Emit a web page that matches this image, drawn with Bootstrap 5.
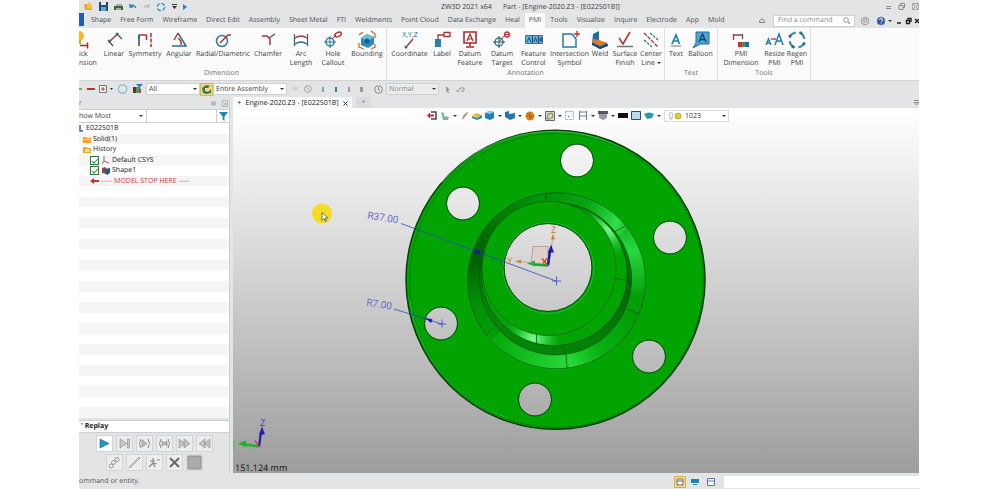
<!DOCTYPE html>
<html lang="en">
<head>
<meta charset="utf-8">
<meta name="viewport" content="width=device-width, initial-scale=1">
<title>ZW3D 2021 x64</title>
<link href="https://cdn.jsdelivr.net/npm/bootstrap@5.3.0/dist/css/bootstrap.min.css" rel="stylesheet">
<style>
  body { font: 7px/9px "Open Sans", "Noto Sans", sans-serif; text-rendering: geometricPrecision; color: #3c3c3c; background: #fff; padding: 0 73px 0 79px; }
  button, input, select { font: inherit; color: inherit; text-rendering: inherit; }
  button { border: 0; background: none; padding: 0; }
  svg { display: block; flex: none; }
  .app-window { background: #e3e4e6; }

  .title-row { height: 13px; }
  .quick-tools { gap: 6px; padding-left: 5px; }
  .title-text { gap: 11px; white-space: pre; padding-top: 1px; }
  .title-left { width: 362px; }

  .menu-row { height: 15px; }
  .file-tab { width: 5px; height: 13px; background: #1f5cb5; }
  .menu-tab { padding: 0 4px; height: 15px; color: #505050; text-decoration: none; white-space: nowrap; line-height: 16px; }
  .menu-tab.current { background: #fbfbfb; }
  .menu-tabs { padding-left: 3px; gap: 1px; }
  .find-box { width: 82px; height: 12px; border: 1px solid #d0d0d0; background: #fff; }
  .find-box input { border: 0; outline: 0; width: 60px; padding: 0; background: none; }
  .find-box input::placeholder { color: #8a8a8a; opacity: 1; }

  .ribbon { height: 53px; background: #fbfbfb; border-bottom: 1px solid #d4d4d4; }
  .tool-group { border-right: 1px solid #e0e0e0; }
  .tool-grid { display: grid; height: 41px; }
  .tool { display: flex; flex-direction: column; align-items: center; padding-top: 2px; white-space: nowrap; }
  .tool.at-edge { align-items: flex-start; text-align: left; }
  .tool svg { width: 20px; height: 20px; }
  .group-name { color: #707070; text-align: center; }
  .g-dim { width: 308px; }
  .g-dim .tool-grid { grid-template-columns: 22px 26px 36px 32px 56px 34px 32px 32px 36px; }
  .g-dim .group-name { padding-right: 22px; }
  .g-ann { width: 278px; }
  .g-ann .tool-grid { grid-template-columns: 45px 20px 36px 28px 35px 37px 24px 26px 26px; }
  .g-txt { width: 53px; }
  .g-txt .tool-grid { grid-template-columns: 22px 27px; }
  .g-too { width: 93px; }
  .g-too .tool-grid { grid-template-columns: 46px 21px 24px; }

  .select-row { height: 16px; gap: 3px; }
  .pick { height: 12px; border: 1px solid #cfcfcf; border-radius: 0; background: #fff; padding: 1px 2px 0; appearance: none; line-height: 10px; width: 100%; }
  .pick-wrap { position: relative; }
  .pick-wrap::after, .caret { content: ""; border: 2px solid transparent; border-top: 2px solid #333; border-bottom: 0; }
  .pick-wrap::after { position: absolute; right: 3px; top: 5px; pointer-events: none; }
  .pick-all { width: 54px; }
  .pick-asm { width: 74px; }
  .pick-norm { width: 53px; color: #888; }
  .pick-norm .pick { background: #ececed; }
  .on-btn { background: #fbd878; border: 1px solid #e0b440; width: 13px; height: 13px; }

  .side { width: 151px; border-right: 1px solid #cfcfcf; }
  .side-head { height: 12px; color: #777; }
  .side-filter { height: 14px; border: 1px solid #cfcfcf; border-width: 1px 0; background: #fff; }
  .pick-show { width: 67px; }
  .pick-show .pick { border: 0; padding-left: 0; }
  .side-filter input { border: 1px solid #cfcfcf; border-width: 0 1px; width: 71px; height: 12px; }
  .tree { background: #fff; }
  .tree li { flex: 1 1 0; min-height: 0; display: flex; align-items: center; gap: 2px; padding-top: 1px; white-space: nowrap; color: #222; }
  .tree li:nth-child(even) { background: #f5f5f5; }
  .tree .lvl1 { padding-left: 4px; }
  .tree .lvl2 { padding-left: 11px; }
  .tree input { appearance: none; width: 9px; height: 9px; margin: 0 1px 0 0; border: 1px solid #2f7a3a; background: #fff; display: grid; place-items: center; }
  .tree input:checked::before { content: ""; width: 6px; height: 3px; border: solid #2a9436; border-width: 0 0 1px 1px; transform: rotate(-45deg); }
  .tree .stop { color: #d04040; }
  .replay-head { height: 13px; background: #fff; border: 1px solid #cfcfcf; border-width: 1px 0; font-weight: 700; line-height: 12px; padding-left: 2px; margin-top: 2px; color: #222; }
  .replay { padding: 2px 0; gap: 2px; }
  .replay div { gap: 3px; }
  .replay button { width: 17px; height: 17px; background: #ededee; border: 1px solid #d4d5d7; display: grid; place-items: center; }
  .replay button.ready { background: #fff; }

  .doc-tabs { height: 11px; }
  .doc-tab { background: #fbfbfb; width: 119px; height: 11px; color: #222; white-space: nowrap; padding-top: 1px; }
  .new-tab { color: #777; background: #d9dadc; width: 15px; height: 11px; }
  .doc-area { margin-left: 3px; }
  .view { background: linear-gradient(#fff 0%, #fafafa 6%, #9d9d9d 100%); position: relative; overflow: hidden; }
  .scene { position: absolute; inset: 0; width: 100%; height: 100%; }
  .view-tools { position: relative; padding: 1px 0 0 4px; height: 14px; gap: 3px; }
  .pick-layer { width: 65px; }
  .pick-layer .pick { padding-left: 20px; border-color: #dcdcdc; }
  .pick-layer svg { position: absolute; left: 4px; top: 2px; }

  .status { height: 16px; color: #555; padding-top: 1px; }
  .status-input { width: 195px; height: 12px; border: 0; background: #fff; }
</style>
</head>
<body class="vh-100 overflow-hidden">
<div class="app-window vh-100 d-flex flex-column overflow-hidden">

  <header class="title-row d-flex align-items-center">
    <div class="title-left">
      <div class="quick-tools d-flex align-items-center">
        <svg width="9" height="9" viewBox="0 0 9 9"><path d="M0 2h3l1 1h4v5H1z" fill="#f2a31b"/><path d="M4 0l4 2-1 5-4-1z" fill="#f6c35a"/></svg>
        <svg width="9" height="9" viewBox="0 0 9 9"><path d="M0 0h9v9H0z" fill="#2c4a68"/><path d="M2 0h5v3H2z" fill="#dfe9f2"/><path d="M2 5h5v4H2z" fill="#58a8d8"/></svg>
        <svg width="9" height="8" viewBox="0 0 9 8"><path d="M0 3h9v4H0z" fill="#555"/><path d="M2 1h6v2H2zM2 5h5v2H2z" fill="#9ab890"/></svg>
        <svg width="8" height="7" viewBox="0 0 8 7"><path d="M1 4q3-4 6 1M1 1v3h3" fill="none" stroke="#2c80b0" stroke-width="1.3"/></svg>
        <svg width="7" height="7" viewBox="0 0 8 7"><path d="M7 4q-3-4-6 1M7 1v3H4" fill="none" stroke="#b0b6ba" stroke-width="1.2"/></svg>
        <svg width="10" height="10" viewBox="0 0 10 10"><circle cx="5" cy="5" r="3.7" fill="none" stroke="#3b92c8" stroke-width="1.4" stroke-dasharray="4 1.8"/></svg>
        <svg width="5" height="5" viewBox="0 0 5 5"><path d="M0 0h5v1H0zM0 2h5L2.500 5z" fill="#333"/></svg>
        <svg width="4" height="6" viewBox="0 0 4 6"><path d="M0 0l4 3-4 3z" fill="#1c86d0"/></svg>
      </div>
    </div>
    <div class="title-text d-flex"><span>ZW3D 2021 x64</span><span>Part - [Engine-2020.Z3 - [E022501B]]</span></div>
    <svg class="ms-auto" width="34" height="7" viewBox="0 0 34 7"><g fill="none" stroke="#8a8a8a"><path d="M1 5.500h5M1 3.500h5M14 2.500h4v4h-4zM15.500 2V.5h4v4H18"/><path d="M28 1l5 5M33 1l-5 5M27.500.5h6v6h-6z" stroke-width=".7"/></g></svg>
  </header>

  <nav class="menu-row d-flex align-items-end">
    <div class="file-tab align-self-start"></div>
    <div class="menu-tabs d-flex align-items-center">
      <a class="menu-tab" href="#">Shape</a><a class="menu-tab" href="#">Free Form</a><a class="menu-tab" href="#">Wireframe</a><a class="menu-tab" href="#">Direct Edit</a><a class="menu-tab" href="#">Assembly</a><a class="menu-tab" href="#">Sheet Metal</a><a class="menu-tab" href="#">FTI</a><a class="menu-tab" href="#">Weldments</a><a class="menu-tab" href="#">Point Cloud</a><a class="menu-tab" href="#">Data Exchange</a><a class="menu-tab" href="#">Heal</a><a class="menu-tab current" href="#">PMI</a><a class="menu-tab" href="#">Tools</a><a class="menu-tab" href="#">Visualize</a><a class="menu-tab" href="#">Inquire</a><a class="menu-tab" href="#">Electrode</a><a class="menu-tab" href="#">App</a><a class="menu-tab" href="#">Mold</a>
    </div>
    <div class="ms-auto d-flex align-items-center align-self-center">
      <svg class="me-2" width="6" height="5" viewBox="0 0 6 5"><path d="M.5 3L3 .7 5.500 3v1.500h-5z" fill="none" stroke="#666" stroke-width=".8"/></svg>
      <label class="find-box d-flex align-items-center justify-content-between px-1"><input type="text" placeholder="Find a command" aria-label="Find a command"><svg width="7" height="7" viewBox="0 0 7 7"><circle cx="3" cy="3" r="2.300" fill="none" stroke="#777" stroke-width=".8"/><path d="M5 5l2 2" stroke="#777"/></svg></label>
      <svg class="ms-1" width="60" height="10" viewBox="0 0 60 10"><circle cx="6" cy="5" r="3.800" fill="#d5d6d8" stroke="#9a9a9a"/><circle cx="6" cy="4.500" r="1.500" fill="none" stroke="#888" stroke-width=".7"/><circle cx="22" cy="5" r="4" fill="#2754a8" stroke="#7f93b8" stroke-width=".8"/><path d="M20.500 4q0-1.500 1.500-1.500T23.500 4 22 5.300M22 6.500v1" fill="none" stroke="#fff"/><path d="M29 4h4l-2 2z" fill="#333"/><path d="M38 7h4M47.500 4.500h3v3h-3zM49 4V2.500h3V6M56 3l4 4M60 3l-4 4" fill="none" stroke="#222" stroke-width="1.400"/></svg>
    </div>
  </nav>

  <section class="ribbon d-flex overflow-hidden">
    <div class="tool-group g-dim">
      <div class="tool-grid">
        <button class="tool at-edge" aria-label="Quick Dimension"><svg viewBox="0 0 20 20"><circle cx="0" cy="6" r="5" fill="#f7b922"/><path d="M0 10h2v4H0z" fill="#e0a010"/><path d="M1 15.500h8M8.500 12.500v6" stroke="#b02828" stroke-width="1.500"/></svg>ick<br>nsion</button>
        <button class="tool"><svg viewBox="0 0 20 20"><path d="M4 10l5 6M12 3l6 6" fill="none" stroke="#555" stroke-width="1.400"/><path d="M5.500 11.500L13 4.500" stroke="#b83030" stroke-width="1.500"/><path d="M4.500 12.500l3-3M11.500 6l3-3" stroke="#356b90" stroke-width="1.500"/></svg>Linear</button>
        <button class="tool"><svg viewBox="0 0 20 20"><path d="M4 5v11" stroke="#444" stroke-width="1.500"/><path d="M4 5h8M11.500 5v5" fill="none" stroke="#b83030" stroke-width="1.500"/><path d="M16 3v14" stroke="#b83030" stroke-width="1.500" stroke-dasharray="4 1.500"/><path d="M4 5v4" stroke="#2b5f85" stroke-width="1.500"/></svg>Symmetry</button>
        <button class="tool"><svg viewBox="0 0 20 20"><path d="M9 3l8 13H3" fill="none" stroke="#356b90" stroke-width="1.500"/><path d="M12 15q1-4-3-7M9 3L5 10" fill="none" stroke="#b83030" stroke-width="1.500"/></svg>Angular</button>
        <button class="tool"><svg viewBox="0 0 20 20"><circle cx="9" cy="11" r="5.500" fill="none" stroke="#35779d" stroke-width="1.500"/><path d="M7 13l8-8h3" fill="none" stroke="#a83434" stroke-width="1.500"/></svg>Radial/Diametric</button>
        <button class="tool"><svg viewBox="0 0 20 20"><path d="M4 6h5l3 3v6" fill="none" stroke="#a83434" stroke-width="1.500"/><path d="M11 8l6-4" stroke="#555" stroke-width="1.300"/></svg>Chamfer</button>
        <button class="tool"><svg viewBox="0 0 20 20"><path d="M3.500 4v12M16.500 4v12" stroke="#356b90" stroke-width="1.300"/><path d="M4 8q6-4 12 0" fill="none" stroke="#a83434" stroke-width="1.500"/><path d="M4 14q6-4 12 0" fill="none" stroke="#356b90" stroke-width="1.300"/></svg>Arc<br>Length</button>
        <button class="tool"><svg viewBox="0 0 20 20"><circle cx="7" cy="12" r="4" fill="none" stroke="#2b7ca8" stroke-width="1.500"/><path d="M7 6v12M1 12h12" stroke="#2b7ca8"/><path d="M9 9l4-4" stroke="#a83434"/><ellipse cx="15" cy="4.500" rx="3.500" ry="2" fill="none" stroke="#b83030" stroke-width="1.500" transform="rotate(-25 15 4.500)"/></svg>Hole<br>Callout</button>
        <button class="tool"><svg viewBox="0 0 20 20"><path d="M4 8l6-4 7 3v7l-6 4-7-3z" fill="#2c89ba"/><path d="M4 8l6-4 7 3-6 4z" fill="#6fc0e0"/><path d="M2 5l4-3M14 1l4 3v4M2 13v4l5 2M18 14v3l-4 2" fill="none" stroke="#d96a20" stroke-width="1.300"/><circle cx="10" cy="11" r="2.500" fill="#175d85"/></svg>Bounding</button>
      </div>
      <div class="group-name">Dimension</div>
    </div>
    <div class="tool-group g-ann">
      <div class="tool-grid">
        <button class="tool"><svg viewBox="0 0 20 20"><text x="10" y="7" font-size="7" text-anchor="middle" fill="#256f9c">X,Y,Z</text><path d="M7 16l6-7" stroke="#a83434" stroke-width="1.500"/><circle cx="6" cy="17" r="1.500" fill="#256f9c"/></svg>Coordinate</button>
        <button class="tool"><svg viewBox="0 0 20 20"><path d="M3 9h6v8H3z" fill="#2a7fb0"/><path d="M6 9V5h6M12 2.500h6v4h-6z" fill="none" stroke="#a83434" stroke-width="1.300"/></svg>Label</button>
        <button class="tool"><svg viewBox="0 0 20 20"><path d="M4 2h12v11H4zM10 13v3M6 17h8" fill="none" stroke="#b02828" stroke-width="1.600"/><path d="M7 11l3-7 3 7M8 9h4" fill="none" stroke="#a02828" stroke-width="1.200"/></svg>Datum<br>Feature</button>
        <button class="tool"><svg viewBox="0 0 20 20"><circle cx="7" cy="12" r="4" fill="none" stroke="#2b7ca8" stroke-width="1.500"/><path d="M7 6v12M1 12h12" stroke="#355" /><path d="M7 12l6-7" stroke="#a83434"/><circle cx="15" cy="4.500" r="2.500" fill="#fff" stroke="#b83030" stroke-width="1.300"/><path d="M13 4.500h4" stroke="#b83030"/></svg>Datum<br>Target</button>
        <button class="tool"><svg viewBox="0 0 20 20"><path d="M1.500 5.500h17v8h-17z" fill="#62b1e0" stroke="#35709c"/><path d="M3 12l2-4.500L7 12M8.500 6v7M10 12l1.500-4.500L13 12M14.500 6v7M16 8h1.500v3H16z" fill="none" stroke="#1c4f78"/></svg>Feature<br>Control</button>
        <button class="tool"><svg viewBox="0 0 20 20"><path d="M3 4h9l4 5v8H3z" fill="none" stroke="#267ba8" stroke-width="1.500"/><path d="M17 1v6M14 4h6" stroke="#c03030" stroke-width="1.400"/></svg>Intersection<br>Symbol</button>
        <button class="tool"><svg viewBox="0 0 20 20"><path d="M3 4l6-3v10l8 2v3l-7 3-8-5z" fill="#1d6ea0"/><path d="M3 9l6 1 8 3-7 3-8-4z" fill="#e07a28"/><path d="M2 13l8 4 8-3v2l-8 3-8-4z" fill="#1b4668"/></svg>Weld</button>
        <button class="tool"><svg viewBox="0 0 20 20"><path d="M4 8l4 6 7-12" fill="none" stroke="#a83434" stroke-width="1.500"/><path d="M2 16.500h16" stroke="#777" stroke-width="1.500"/></svg>Surface<br>Finish</button>
        <button class="tool"><svg viewBox="0 0 20 20"><path d="M3 3l14 14" stroke="#a83434" stroke-width="1.300" stroke-dasharray="4 1"/><path d="M9 3l8 7M3 10l8 7" stroke="#2b7ca8" stroke-width="1.300" stroke-dasharray="3 1"/></svg>Center<span>Line <i class="caret d-inline-block align-middle"></i></span></button>
      </div>
      <div class="group-name">Annotation</div>
    </div>
    <div class="tool-group g-txt">
      <div class="tool-grid">
        <button class="tool"><svg viewBox="0 0 20 20"><path d="M6 14l4-9 3.500 9M7.500 11h5" fill="none" stroke="#257db0" stroke-width="1.700"/><path d="M5 16h10" stroke="#555" stroke-width=".8"/></svg>Text</button>
        <button class="tool"><svg viewBox="0 0 20 20"><path d="M5 2h13v12h-9l-7 4 3-5z" fill="#4aa6da" stroke="#1f6c9c"/><path d="M8 12l3.500-8 3.500 8M9.500 9.500h4" fill="none" stroke="#123f62" stroke-width="1.400"/></svg>Balloon</button>
      </div>
      <div class="group-name">Text</div>
    </div>
    <div class="tool-group g-too">
      <div class="tool-grid">
        <button class="tool"><svg viewBox="0 0 20 20"><path d="M2.500 4v6M11.500 4v5M2 5h10" fill="none" stroke="#8a4040" stroke-width="1.300"/><path d="M7 12h4v5H7z" fill="#d03030"/><path d="M11 12h3v5h-3z" fill="#3a9c40"/><path d="M14 12h4v5h-4z" fill="#2b62b8"/></svg>PMI<br>Dimension</button>
        <button class="tool"><svg viewBox="0 0 20 20"><path d="M1 15l2.500-6L6 15M2 13h3M10 15l4-11 4 11M11.500 11h5" fill="none" stroke="#257db0" stroke-width="1.500"/><path d="M6 9h5" stroke="#b03030" stroke-width="1.300"/></svg>Resize<br>PMI</button>
        <button class="tool"><svg viewBox="0 0 20 20"><circle cx="10" cy="10" r="7.500" fill="none" stroke="#3188b4" stroke-width="2" stroke-dasharray="8.300 3.480" stroke-dashoffset="-2"/><path d="M13 1l1 4 2-2zM19 13l-4 1 2 2zM7 19l-1-4-2 2zM1 7l4-1-2-2z" fill="#3a5a70"/></svg>Regen<br>PMI</button>
      </div>
      <div class="group-name">Tools</div>
    </div>
  </section>

  <section class="select-row d-flex align-items-center">
    <svg width="51" height="10" viewBox="0 0 51 10"><path d="M0 5h3" stroke="#3a9c40" stroke-width="1.500"/><path d="M8 5h8" stroke="#c03040" stroke-width="2"/><path d="M20.500 1.500h7v7h-7z" fill="#fff" stroke="#777"/><path d="M24 3v4M22 5h4" stroke="#c03040"/><path d="M31 4h3l-1.500 2z" fill="#333"/><path d="M39 5l2-4h5l2 4-2 4h-5z" fill="#dbe8ee" stroke="#86a8b8"/></svg>
    <svg width="10" height="10" viewBox="0 0 10 10"><path d="M0 3h3v6H0z" fill="#5a3030"/><path d="M3 3h3v6H3z" fill="#48a050"/><path d="M6 5h2v4H6z" fill="#c04030"/><path d="M3 0h7L7 3v3H6V3z" fill="#2477b8"/></svg>
    <div class="d-flex align-items-center">
      <div class="pick-wrap pick-all"><select class="pick" aria-label="Filter"><option>All</option></select></div>
      <button class="on-btn" aria-label="Pick scope"><svg width="11" height="11" viewBox="0 0 11 11"><path d="M1 4l4-3 4 1-2 2H4v3l3 1 3-3v4L6 10 2 9z" fill="#267c6c"/></svg></button>
      <div class="pick-wrap pick-asm"><select class="pick" aria-label="Scope"><option>Entire Assembly</option></select></div>
    </div>
    <svg width="81" height="10" viewBox="0 0 81 10"><path d="M3 3h5v3H3z" fill="#d0d1d3"/><circle cx="18" cy="5" r="3.500" fill="none" stroke="#aaa"/><path d="M16 3l4 4" stroke="#aaa"/><path d="M32 3h2v5h-2zM58 3h2v5h-2zM70 3h3v5h-3z" fill="#999"/><path d="M45 3h2v5h-2z" fill="#2a7c9c"/></svg>
    <svg width="9" height="9" viewBox="0 0 9 9"><circle cx="4.500" cy="4.500" r="3.800" fill="none" stroke="#888"/><path d="M4.500 2v3l1.500 1" fill="none" stroke="#888"/></svg>
    <div class="pick-wrap pick-norm"><select class="pick" aria-label="Mode"><option>Normal</option></select></div>
    <svg width="24" height="9" viewBox="0 0 24 9"><path d="M4 1l4 4H6l1 3-1 .5L5 6 4 7z" fill="#999"/><path d="M14 5l2 2 2-4h4v3h-3" fill="none" stroke="#999"/></svg>
  </section>

  <main class="flex-fill d-flex overflow-hidden">
    <aside class="side d-flex flex-column">
      <div class="side-head d-flex align-items-center">r
        <svg class="ms-auto" width="18" height="7" viewBox="0 0 18 7"><path d="M0 1.500h5v4H0z" fill="#b8b8b8"/><path d="M11 .5h5.500v6H11zM12 2l4 4M16 2l-4 4" fill="none" stroke="#aaa" stroke-width=".8"/></svg>
      </div>
      <div class="side-filter d-flex align-items-center">
        <div class="pick-wrap pick-show"><select class="pick" aria-label="Show"><option>how Most</option></select></div>
        <input type="text" aria-label="Filter tree">
        <svg class="mx-auto" width="9" height="9" viewBox="0 0 9 9"><path d="M0 0h9L5.500 4.500V9L3.500 7.500v-3z" fill="#2087b4"/></svg>
      </div>
      <ul class="tree list-unstyled flex-fill d-flex flex-column m-0">
        <li><svg width="5" height="8" viewBox="0 0 5 8"><path d="M1 0v6h3" fill="none" stroke="#256f9c" stroke-width="1.500"/></svg>E022501B</li>
        <li class="lvl1"><svg width="8" height="7" viewBox="0 0 8 7"><path d="M0 1h3l1 1h4v5H0z" fill="#f0a42a"/><path d="M1 3h7v1H1z" fill="#fbd685"/></svg>Solid(1)</li>
        <li class="lvl1"><svg width="8" height="7" viewBox="0 0 8 7"><path d="M0 1h3l1 1h4v5H0z" fill="#f0a42a"/><path d="M2 3h5v3H2z" fill="#fbd685"/></svg>History</li>
        <li class="lvl2"><input type="checkbox" checked aria-label="Default CSYS"><svg width="8" height="8" viewBox="0 0 8 8"><path d="M2 0v5l5 2M2 5L0 8" fill="none" stroke="#a86060"/></svg>Default CSYS</li>
        <li class="lvl2"><input type="checkbox" checked aria-label="Shape1"><svg width="8" height="8" viewBox="0 0 8 8"><path d="M0 1l3-1 2 2v5L0 6z" fill="#a84038"/><path d="M3 2l5-1v5L5 8 3 6z" fill="#1c5d8e"/></svg>Shape1</li>
        <li class="lvl2 stop"><svg width="9" height="6" viewBox="0 0 9 6"><path d="M0 3l4-3v2h5v2H4v2z" fill="#c83030"/></svg>----- MODEL STOP HERE -----</li>
        <li></li><li></li><li></li><li></li><li></li><li></li><li></li><li></li><li></li><li></li><li></li>
        <li></li><li></li><li></li><li></li><li></li><li></li><li></li><li></li><li></li><li></li><li></li>
      </ul>
      <div class="replay-head">' Replay</div>
      <div class="replay d-flex flex-column align-items-center">
        <div class="d-flex">
          <button class="ready" aria-label="Play"><svg width="11" height="11" viewBox="0 0 11 11"><path d="M1 1l9 4.500L1 10z" fill="#2596c8" stroke="#185f88" stroke-width=".6"/></svg></button>
          <button aria-label="Step"><svg width="11" height="11" viewBox="0 0 11 11"><path d="M1 1l7 4.500L1 10zM8.500 1h2v9h-2z" fill="#c8c8c8" stroke="#888" stroke-width=".6"/></svg></button>
          <button aria-label="Play feature"><svg width="13" height="11" viewBox="0 0 13 11"><path d="M4 2l5 3.500L4 9z" fill="#bbb" stroke="#888" stroke-width=".6"/><path d="M3 1q-3 4.500 0 9M10 1q3 4.500 0 9" fill="none" stroke="#888"/></svg></button>
          <button aria-label="Step feature"><svg width="13" height="11" viewBox="0 0 13 11"><path d="M4 3l4 2.500L4 8zM8 3h1v5H8z" fill="#bbb" stroke="#888" stroke-width=".6"/><path d="M3 1q-3 4.500 0 9M10 1q3 4.500 0 9" fill="none" stroke="#888"/></svg></button>
          <button aria-label="Forward"><svg width="13" height="11" viewBox="0 0 13 11"><path d="M1 1l6 4.500L1 10zM6 1l6 4.500L6 10z" fill="#c4c4c4" stroke="#888" stroke-width=".6"/></svg></button>
          <button aria-label="Back"><svg width="13" height="11" viewBox="0 0 13 11"><path d="M7 1L1 5.500 7 10zM12 1L6 5.500l6 4.500z" fill="#c4c4c4" stroke="#888" stroke-width=".6"/></svg></button>
        </div>
        <div class="d-flex">
          <button aria-label="Link"><svg width="13" height="13" viewBox="0 0 13 13"><g fill="none" stroke="#999"><circle cx="3" cy="10" r="2"/><circle cx="5.500" cy="6.500" r="2"/><circle cx="9" cy="3.500" r="2"/></g></svg></button>
          <button aria-label="Edit"><svg width="13" height="13" viewBox="0 0 13 13"><path d="M1 12l2-3 8-8 1 1-8 8z" fill="#ddd" stroke="#888" stroke-width=".7"/></svg></button>
          <button aria-label="Run"><svg width="13" height="13" viewBox="0 0 13 13"><path d="M5 2v5l4 1M5 7l-4 4M7 11L5 7M2 5h5M9 4h3" fill="none" stroke="#888" stroke-width="1.200"/></svg></button>
          <button aria-label="Delete"><svg width="13" height="13" viewBox="0 0 13 13"><path d="M2 2l9 9M11 2l-9 9" stroke="#666" stroke-width="2"/></svg></button>
          <button aria-label="Stop"><svg width="15" height="15" viewBox="0 0 15 15"><path d="M1 1h13v13H1z" fill="#aaa" stroke="#888"/></svg></button>
        </div>
      </div>
    </aside>

    <section class="doc-area flex-fill d-flex flex-column">
      <div class="doc-tabs d-flex align-items-center">
        <div class="doc-tab d-flex align-items-center justify-content-evenly"><span>+</span><span>Engine-2020.Z3 - [E022501B]</span><svg width="5" height="5" viewBox="0 0 5 5"><path d="M.5.5l4 4M4.500.5l-4 4" stroke="#333"/></svg></div>
        <button class="new-tab ms-1" aria-label="New tab">+</button>
        <svg class="ms-auto" width="5" height="6" viewBox="0 0 5 6"><path d="M0 .5h5M0 2.500h5L2.500 5z" fill="none" stroke="#777" stroke-width=".8"/></svg>
      </div>
      <div class="view flex-fill">
        <svg class="scene" viewBox="233 108 686 364" role="img" aria-label="Flange model">
          <defs>
            <linearGradient id="sa" gradientUnits="userSpaceOnUse" x1="470" y1="257" x2="544" y2="192"><stop stop-color="#005c00"/><stop offset="1" stop-color="#019a08"/></linearGradient>
            <linearGradient id="sb" gradientUnits="userSpaceOnUse" x1="544" y1="192" x2="629" y2="229"><stop stop-color="#019006"/><stop offset=".5" stop-color="#06a812"/><stop offset=".85" stop-color="#2fe04a"/><stop offset="1" stop-color="#14bb26"/></linearGradient>
            <linearGradient id="sc" gradientUnits="userSpaceOnUse" x1="629" y1="229" x2="639" y2="314"><stop stop-color="#17bd2a"/><stop offset=".25" stop-color="#27d83e"/><stop offset=".8" stop-color="#02a006"/></linearGradient>
            <linearGradient id="sd" gradientUnits="userSpaceOnUse" x1="639" y1="314" x2="569" y2="368"><stop stop-color="#029a04"/><stop offset=".6" stop-color="#08b010"/><stop offset="1" stop-color="#2be040"/></linearGradient>
            <linearGradient id="se" gradientUnits="userSpaceOnUse" x1="569" y1="368" x2="490" y2="340"><stop stop-color="#29d83c"/><stop offset=".6" stop-color="#10bc1c"/><stop offset="1" stop-color="#03a808"/></linearGradient>
            <linearGradient id="sf" gradientUnits="userSpaceOnUse" x1="490" y1="340" x2="470" y2="257"><stop stop-color="#02a006"/><stop offset=".5" stop-color="#018e06"/><stop offset="1" stop-color="#005c00"/></linearGradient>
            <linearGradient id="wall" x1="1" y1="0" x2="0" y2="1"><stop stop-color="#0a9a12"/><stop offset=".3" stop-color="#016a04"/><stop offset=".6" stop-color="#018206"/><stop offset="1" stop-color="#018a06"/></linearGradient>
            <radialGradient id="glow"><stop stop-color="#7dfa92"/><stop offset=".35" stop-color="#35d84c"/><stop offset="1" stop-color="#02a404" stop-opacity="0"/></radialGradient>
            <clipPath id="boss"><ellipse cx="554.300" cy="273.700" rx="73" ry="71.500"/></clipPath>
            <mask id="bores"><path d="M233 108h686v364H233z" fill="#fff"/><circle cx="577" cy="160" r="16"/><circle cx="463" cy="203" r="16"/><circle cx="670" cy="237" r="16"/><circle cx="649" cy="356" r="16"/><circle cx="535" cy="399" r="16"/><circle cx="441" cy="323" r="16"/><circle cx="548" cy="267" r="43.500"/></mask>
          </defs>
          <g mask="url(#bores)">
            <circle cx="555.500" cy="279.300" r="149.500" fill="#02a402" stroke="#053c0a" stroke-width="1.500"/>
            <path d="M442 182a147 147 0 0 1 184-32M410 300a147 147 0 0 0 98 118" fill="none" stroke="#3fc455" stroke-width=".8"/>
            <circle cx="556.500" cy="280" r="147" fill="none" stroke="#056a0a" stroke-width=".6"/>
            <path d="M556.500 280.300L470.500 257.300A89 88 0 0 1 544 192.500z" fill="url(#sa)"/>
            <path d="M556.500 280.300L544 192.500A89 88 0 0 1 629.400 229.200z" fill="url(#sb)"/>
            <path d="M556.500 280.300L629.400 229.200A89 88 0 0 1 639 313.700z" fill="url(#sc)"/>
            <path d="M556.500 280.300L639 313.700A89 88 0 0 1 569 368z" fill="url(#sd)"/>
            <path d="M556.500 280.300L569 368A89 88 0 0 1 490.400 339.800z" fill="url(#se)"/>
            <path d="M556.500 280.300L490.400 339.800A89 88 0 0 1 470.500 257.300z" fill="url(#sf)"/>
            <path d="M546 202v-10M615 231l11-6M627 308l11 5M566 354l1 14M494 327l-7 7" stroke="#034a06" stroke-width=".7"/>
            <ellipse cx="556.500" cy="280.300" rx="89" ry="88" fill="none" stroke="#045c08" stroke-width=".8"/>
            <circle cx="555.500" cy="278.300" r="76" fill="url(#wall)" stroke="#034a06" stroke-width=".7"/>
            <ellipse cx="554.300" cy="273.700" rx="73" ry="71.500" fill="#02a404"/>
            <g clip-path="url(#boss)"><circle cx="533" cy="338" r="32" fill="url(#glow)"/><circle cx="610" cy="228" r="32" fill="url(#glow)"/></g>
            <ellipse cx="554.300" cy="273.700" rx="73" ry="71.500" fill="none" stroke="#034a06" stroke-width=".8"/>
            <circle cx="549" cy="268" r="67" fill="#02a402" stroke="#045c08" stroke-width=".7"/>
            <path d="M616 278l10 2M536.500 334v10M561 344l5 10M626 274l5 10" fill="none" stroke="#034a06" stroke-width=".7"/>
            <circle cx="548.500" cy="267.500" r="45.500" fill="none" stroke="#2cb840" stroke-width=".8"/>
          </g>
          <g fill="none" stroke="#0a4a12" stroke-width="1"><circle cx="577" cy="160" r="16.500"/><circle cx="463" cy="203" r="16.500"/><circle cx="670" cy="237" r="16.500"/><circle cx="649" cy="356" r="16.500"/><circle cx="535" cy="399" r="16.500"/><circle cx="441" cy="323" r="16.500"/><circle cx="548" cy="267" r="44"/></g>
          <g stroke="#3444c4" stroke-width=".8" fill="none">
            <path d="M401 223L556 280.500M552 280.500h9M556.500 276v9M394 308.500L442 323.500M438 323.500h8M442 319v8"/>
            <path d="M475 249l5 2-1 3-4-2zM426 318l6 1-1 3z" fill="#1420a0" stroke="#1420a0"/>
          </g>
          <g fill="#6a6ac8" font-size="10" font-family="Roboto, sans-serif">
            <text transform="translate(367 218) rotate(9)">R37.00</text>
            <text transform="translate(366 305) rotate(9)">R7.00</text>
          </g>
          <path d="M533 246h15v18h-17z" fill="#ddd0cc" stroke="#b08a70" stroke-width=".7"/>
          <g font-size="9" fill="#c07a30"><text x="551" y="232">Z</text><text x="507" y="263">Y</text></g>
          <path d="M549 263l4-27M547 264l-28-3" stroke="#c8966a" stroke-width=".8"/>
          <path d="M553 233l-2 6h4zM515 261l6-2v4z" fill="#c88a30"/>
          <path d="M548 265l2-15" stroke="#1c1cb0" stroke-width="2.500"/><path d="M551 244l-3 8h6z" fill="#1c1cb0"/>
          <path d="M548 265l-14-1" stroke="#1fa030" stroke-width="2.500"/><path d="M527 263l8-3v6z" fill="#28b040"/>
          <path d="M542 258l5 6M547 258l-4 5" stroke="#d84010" stroke-width="1.300"/>
          <path d="M259 446l2-14" stroke="#2020b0" stroke-width="2.200"/><path d="M262 426l-3 8h6z" fill="#2020b0"/>
          <path d="M259 446l-14-2" stroke="#20b030" stroke-width="2.500"/><path d="M238 443l8-3v7z" fill="#20b030"/>
          <path d="M234 440v8" stroke="#20d030" stroke-width="1"/>
          <path d="M255 440l4 6" stroke="#d83030" stroke-width="1.200"/>
          <text x="260" y="425" font-size="9" fill="#3a3ac0">Z</text>
          <text x="235" y="470" font-size="9" fill="#111">151.124 mm</text>
          <circle cx="322" cy="213" r="10" fill="#f5dc22"/>
          <path d="M322 212v8l2-2 1.500 3 1-.5-1.500-3h3z" fill="#fff" stroke="#444" stroke-width=".7"/>
        </svg>
        <div class="view-tools d-flex align-items-center justify-content-center">
          <svg width="10" height="9" viewBox="0 0 10 9"><path d="M4 1h5v7H4" fill="none" stroke="#444" stroke-width="1.500"/><path d="M0 4.500l3-3v2h4v2H3v2z" fill="#c82830"/></svg>
          <svg width="10" height="9" viewBox="0 0 10 9"><path d="M1 1l3 1v3l5 1-1 3H3z" fill="#7ab890"/></svg><i class="caret"></i>
          <svg width="9" height="8" viewBox="0 0 9 8"><path d="M2 8l1-4 4-4 1 1-4 5z" fill="#a89060"/></svg>
          <svg width="10" height="9" viewBox="0 0 10 9"><path d="M0 4l5-2 5 2-5 3z" fill="#e4c030"/><path d="M0 5l5 2v2L0 7zM10 4v3L5 9V7z" fill="#2c8cb0"/></svg>
          <svg width="10" height="9" viewBox="0 0 10 9"><path d="M0 2l4-2 5 1v6L5 9 0 7z" fill="#2080b8"/><path d="M0 2l4-2 5 1-4 2z" fill="#90c8e4"/></svg><i class="caret"></i>
          <svg width="10" height="9" viewBox="0 0 10 9"><path d="M0 1l4-1v3l6-1v5L5 9 0 6z" fill="#2478ac"/></svg><i class="caret"></i>
          <svg width="10" height="10" viewBox="0 0 10 10"><circle cx="5" cy="5" r="4.500" fill="#e08a20"/><path d="M1 5h8M5 1v8M2 2l6 6" stroke="#a05810" stroke-width=".8"/></svg><i class="caret"></i>
          <svg width="10" height="10" viewBox="0 0 10 10"><path d="M.5.5h9v9h-9z" fill="#d8dcc0" stroke="#667"/><path d="M2 8l1-5 4-1 1 4-4 2z" fill="#e8d890" stroke="#688"/></svg><i class="caret"></i>
          <svg width="10" height="9" viewBox="0 0 10 9"><path d="M.5.5h8v8h-8z" fill="#f4f8fa" stroke="#9ab0b8" stroke-dasharray="2 1"/><path d="M3 6l1-1" stroke="#256"/></svg>
          <svg width="10" height="9" viewBox="0 0 10 9"><path d="M1.500 0v9M8.500 0v9M1 5h8M2 1h6" fill="none" stroke="#6a8898" stroke-width="1.200"/></svg><i class="caret"></i>
          <svg width="10" height="9" viewBox="0 0 10 9"><path d="M1 1h8v6L5 9 1 7z" fill="#99a"/><path d="M0 0h10v3H0z" fill="#556"/></svg><i class="caret"></i>
          <svg width="10" height="5" viewBox="0 0 10 5"><path d="M0 0h10v5H0z" fill="#111"/></svg>
          <svg width="10" height="9" viewBox="0 0 10 9"><path d="M.5.5h9v8h-9z" fill="#b8dcf0" stroke="#445"/></svg>
          <svg width="10" height="8" viewBox="0 0 10 8"><path d="M0 2q5-3 10 0L8 6 3 7z" fill="#2a98a8"/></svg><i class="caret"></i>
          <div class="pick-wrap pick-layer"><svg width="14" height="8" viewBox="0 0 14 8"><path d="M2 5Q0 1 3 .5 6 1 4 5v2H2z" fill="#fff" stroke="#999" stroke-width=".7"/><circle cx="10" cy="4" r="3" fill="#e0d020" stroke="#a89818" stroke-width=".7"/></svg><select class="pick" aria-label="Layer"><option>1023</option></select></div>
        </div>
      </div>
    </section>
  </main>

  <footer class="status d-flex align-items-center">
    <span>ommand or entity.</span>
    <div class="ms-auto d-flex align-items-center gap-2">
      <svg width="42" height="12" viewBox="0 0 42 12"><path d="M.5.5h11v11H.5z" fill="#fbdf90" stroke="#d8b040"/><path d="M3 3h6v6H3zM3 5h6" fill="#fff" stroke="#667"/><path d="M17 3h8v4h-8zM19 8h4v1h-4z" fill="#1c86a8"/><path d="M33.500 2.500h7v7h-7zM33 5h8" fill="#fff" stroke="#5878a8"/></svg>
      <input class="status-input" type="text" aria-label="Command">
    </div>
  </footer>
</div>
<script src="https://cdn.jsdelivr.net/npm/bootstrap@5.3.0/dist/js/bootstrap.bundle.min.js"></script>
</body>
</html>
